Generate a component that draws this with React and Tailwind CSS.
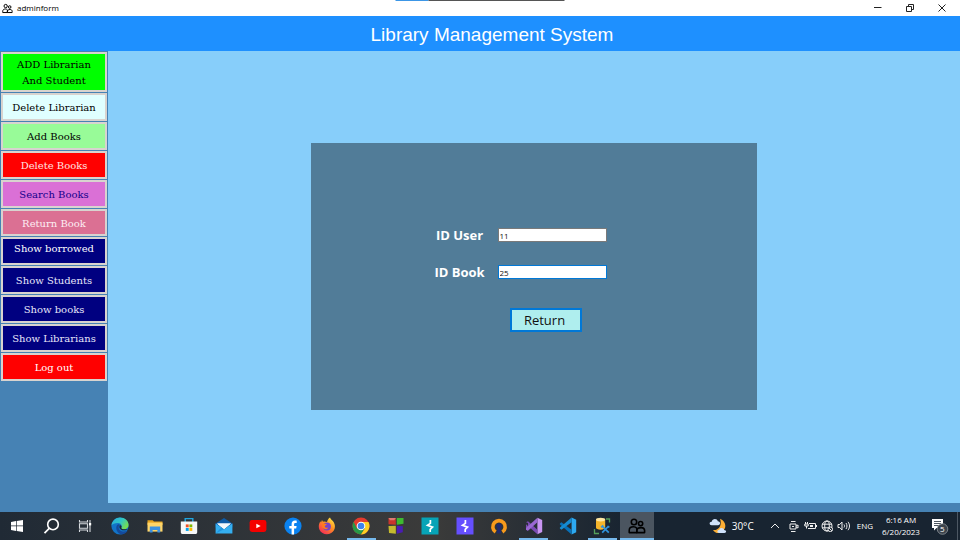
import React, { useState } from "react";

const menuItems = [
  { label: "Delete Librarian", style: "items-center bg-[#e0ffff] text-black" },
  { label: "Add Books", style: "items-center bg-[#98fb98] text-black" },
  { label: "Delete Books", style: "items-center bg-[#ff0000] text-[#ffe4e1]" },
  { label: "Search Books", style: "items-center bg-[#da70d6] text-[#14008c]" },
  { label: "Return Book", style: "items-center bg-[#db7093] text-[#fdeef4]" },
  { label: "Show borrowed", style: "items-start bg-[#000080] text-white" },
  { label: "Show Students", style: "items-center bg-[#000080] text-[#e6e6fa]" },
  { label: "Show books", style: "items-center bg-[#000080] text-[#e6e6fa]" },
  { label: "Show Librarians", style: "items-center bg-[#000080] text-[#e6e6fa]" },
  { label: "Log out", style: "items-center bg-[#ff0000] text-white" },
];

function PeopleIcon({ className }) {
  return (
    <svg className={className} viewBox="0 0 18 16" fill="none" stroke="#000" strokeWidth="1.6" strokeLinejoin="round">
      <circle cx="6" cy="4" r="2.7" />
      <circle cx="12.6" cy="5.6" r="2.1" />
      <path d="M1.2 14.6v-2.2c0-2.2 1.8-3.6 4.2-3.6 1.4 0 2.6.4 3.4 1.4v4.4z" />
      <path d="M8.8 14.6h7.8v-2c0-1.8-1.4-3-3.4-3-2.6 0-4.4 1.4-4.4 3z" />
    </svg>
  );
}

function Icon({ children }) {
  return (
    <svg className="h-[18px] w-[18px]" viewBox="0 0 18 18" fill="none" aria-hidden="true">
      {children}
    </svg>
  );
}

const apps = [
  {
    name: "Start",
    icon: (
      <Icon>
        <path fill="#fff" d="M3 4.9 8 4.1v4.5H3zM8.7 4 15 3v5.6H8.7zM3 9.3h5v4.6l-5-.8zM8.7 9.3H15V15l-6.3-1z" />
      </Icon>
    ),
  },
  {
    name: "Search",
    icon: (
      <Icon>
        <circle cx="10" cy="7.400" r="5.300" stroke="#fff" strokeWidth="1.600" />
        <path d="M6.200 11.400 1.500 16.200" stroke="#fff" strokeWidth="1.700" />
      </Icon>
    ),
  },
  {
    name: "Task view",
    icon: (
      <Icon>
        <path d="M2.500 3v2h8V3M2.500 15v-2h8v2M2.500 6.800h8v4.400h-8zM13 3v12" stroke="#d5d9dd" strokeWidth="1.100" />
        <path d="M12 6h2.200v2.400H12z" fill="#fff" />
      </Icon>
    ),
  },
  {
    name: "Edge",
    icon: (
      <Icon>
        <defs>
          <linearGradient id="edgeTop" x1="0" y1="0" x2="1" y2=".6">
            <stop stopColor="#25a7e0" />
            <stop offset=".55" stopColor="#31c6c4" />
            <stop offset="1" stopColor="#78dd4c" />
          </linearGradient>
        </defs>
        <circle cx="9" cy="9" r="8.6" fill="#1274c8" />
        <path d="M.5 8.4C1 3.7 4.6.4 9 .4c5 0 8.6 3.5 8.6 7.4 0 2.8-2 4.5-4.6 4.5-2 0-3.2-.8-2.7-1.6 1.3-2-.2-4.6-3.2-4.7C4 5.9 1.4 6.9.5 8.4z" fill="url(#edgeTop)" />
        <path d="M6.2 7.9c-2 2.6-.8 8 4.3 9.6 2.7-.3 5-1.8 6.3-4-4.5 2.2-9.8.5-9.1-4.1.1-.8.5-1.4 1-1.9-.9-.3-1.8-.2-2.5.4z" fill="#144a9c" />
        <path d="M8.9 8c-1.8 3.3 1.6 6.4 6.4 5l2.2-1.3c-1.3.8-7.6 1.3-7.2-1 .7-1.2.1-2.1-1.4-2.7z" fill="#1b2634" />
      </Icon>
    ),
  },
  {
    name: "File Explorer",
    icon: (
      <Icon>
        <path d="M1.5 3.2h5.2l1.3 1.4h8.5V8h-15z" fill="#e5a31e" />
        <path d="M1.5 5.6h15v9h-15z" fill="#ffd568" />
        <path d="M3.8 15.5V9.6h10.4v5.9h-2.8v-2.6H6.6v2.6z" fill="#3c91e0" />
      </Icon>
    ),
  },
  {
    name: "Microsoft Store",
    icon: (
      <Icon>
        <path d="M5.2 5V1.6h7.6V5" stroke="#20a6e0" strokeWidth="1.4" />
        <path d="M.8 4.4h16.4v10.8c0 1-.7 1.8-1.8 1.8H2.6c-1.1 0-1.8-.8-1.8-1.8z" fill="#f5f6f7" />
        <path d="M5.8 7.4h2.9v2.9H5.8z" fill="#f25022" />
        <path d="M9.4 7.4h2.9v2.9H9.4z" fill="#7fba00" />
        <path d="M5.8 11h2.9v2.9H5.8z" fill="#00a4ef" />
        <path d="M9.4 11h2.9v2.9H9.4z" fill="#ffb900" />
      </Icon>
    ),
  },
  {
    name: "Mail",
    icon: (
      <Icon>
        <path d="M.6 6.6 9 1l8.400 5.600v4H.6z" fill="#0d5ba6" />
        <path d="M2.200 6.400h13.600L9 12.600z" fill="#f3f8fb" />
        <path d="M.6 6.600 9 12.200l8.400-5.600v10H.6z" fill="#35aff0" />
        <path d="M2 6.500h14L9 12z" fill="#f3f8fb" />
        <path d="m.6 16.600 5.600-6.200L9 12.200z" fill="#2196e0" />
      </Icon>
    ),
  },
  {
    name: "YouTube",
    icon: (
      <Icon>
        <rect x=".6" y="3" width="16.8" height="12" rx="2.4" fill="#f40000" />
        <path d="m7.3 6.7 4.4 2.3-4.4 2.3z" fill="#fff" />
      </Icon>
    ),
  },
  {
    name: "Facebook",
    icon: (
      <Icon>
        <circle cx="9" cy="9" r="8.6" fill="#0a82f0" />
        <path d="M7.6 17.5v-6H5.3V8.9h2.3V7.2c0-2.4 1.3-3.6 3.4-3.6.8 0 1.5.1 1.7.2v2.1h-1.2c-1.1 0-1.4.6-1.4 1.4v1.6h2.5l-.4 2.6h-2.1v6z" fill="#fff" />
      </Icon>
    ),
  },
  {
    name: "Firefox",
    icon: (
      <Icon>
        <defs>
          <linearGradient id="fox" x1=".9" y1="0" x2=".2" y2="1">
            <stop stopColor="#fff04a" />
            <stop offset=".45" stopColor="#ff9220" />
            <stop offset="1" stopColor="#f4265b" />
          </linearGradient>
        </defs>
        <path d="M12 .6c.5 1.7 1.8 2.3 2.8 3.5 3.4 4 2.6 9.5-1.6 12-4.3 2.5-9.7 1-11.7-3.3C.2 9.8.8 6.6 2.4 4.2l.6 1.3 1-2.4 1 1.7c1.5-.4 3-.1 4 .3.4-1.8 1.4-3.5 3-4.5z" fill="url(#fox)" />
        <circle cx="9" cy="9.5" r="3.9" fill="#7544c8" />
        <path d="M4.4 6.9c1.4-.7 2.8.1 4.4.3-.1 1-1.5 1.2-2 1.700-.2 1.600 1.600 2.400 3.500 1.500-1 2.600-5 2.200-5.900-.4z" fill="#ff7a1c" />
      </Icon>
    ),
  },
  {
    name: "Chrome",
    running: true,
    icon: (
      <Icon>
        <circle cx="9" cy="9" r="8.5" fill="#e33b2e" />
        <path d="M1.6 4.8A8.5 8.5 0 0 0 9 17.5l4-6.3-8 .2z" fill="#279847" />
        <path d="M9 17.5A8.5 8.5 0 0 0 16.5 5H9l4 6.3z" fill="#fdd023" />
        <circle cx="9" cy="9" r="4.3" fill="#fff" />
        <circle cx="9" cy="9" r="3.3" fill="#3d83ee" />
      </Icon>
    ),
  },
  {
    name: "Blocks",
    icon: (
      <Icon>
        <path d="M1.500 1h7.300v6.800l-7.300-.5z" fill="#c9352c" />
        <path d="M9.800 1h6.700v5.800l-6.700 1z" fill="#3dba30" />
        <path d="M1.500 9l7.300-.2v8L2 16z" fill="#c5ba2e" />
        <path d="M9.800 8.800l6 .4v6l-6 1.600z" fill="#4a1cb4" />
        <path d="M1.500 1h7.300L7.300 3.200H3z" fill="#de7a71" />
      </Icon>
    ),
  },
  {
    name: "Burp Suite Community",
    icon: (
      <Icon>
        <path d="M.5.5h17v17H.5z" fill="#07a4b7" />
        <path d="M9.400 3v3.400L6.500 8.300l5 1.800-2.300 2.200V15" stroke="#fff" strokeWidth="1.700" />
      </Icon>
    ),
  },
  {
    name: "Burp Suite",
    icon: (
      <Icon>
        <path d="M.5.5h17v17H.5z" fill="#654fff" />
        <path d="M9.400 3v3.400L6.500 8.300l5 1.800-2.300 2.200V15" stroke="#fff" strokeWidth="1.700" />
      </Icon>
    ),
  },
  {
    name: "OpenVPN",
    icon: (
      <Icon>
        <path d="M5.6 15A6.2 6.2 0 1 1 12.400 15" stroke="#f79a1c" strokeWidth="3.6" />
        <path d="M9 6.2a2.8 2.8 0 0 1 1.5 5.100l.6 5.300H6.900l.6-5.300A2.800 2.800 0 0 1 9 6.200z" fill="#1d2a70" />
      </Icon>
    ),
  },
  {
    name: "Visual Studio",
    running: true,
    icon: (
      <Icon>
        <path d="M12.400.8 17.200 3v12l-4.800 2.200z" fill="#c995f3" />
        <path d="M1 5.200 3 4.300l9.400 8.500v4.400L1 7.200zM1 5.200v7.600l2 .9V6z" fill="#7c4bb5" />
        <path d="M3 13.700 12.400 5.200V.8L1 11v1.800z" fill="#9a68d2" />
      </Icon>
    ),
  },
  {
    name: "Visual Studio Code",
    icon: (
      <Icon>
        <path d="M12.600.6 17.200 2.700v12.600l-4.600 2.100z" fill="#2da9f1" />
        <path d="m.9 6.400 1.500-1.100 10.200 7.500v4.600L.9 7.400z" fill="#0871b9" />
        <path d="m.9 11.600 1.500 1.100L12.600 5.200V.6L.9 10.600z" fill="#168bd2" />
      </Icon>
    ),
  },
  {
    name: "SQL Server",
    running: true,
    icon: (
      <Icon>
        <path d="M13 2h3.500v3.500M1.500 12v4.500H6" stroke="#55a05a" strokeWidth="1.300" />
        <path d="M3 2.600v8.200c0 1 1.900 1.900 4.600 1.900s4.600-.9 4.600-1.900V2.600z" fill="#f5b52b" />
        <ellipse cx="7.600" cy="2.600" rx="4.600" ry="1.900" fill="#ffe7a0" />
        <path d="m9 8.800 6.800 6.800M15.700 9l-6.500 6.700M8.200 10.400l2-2M14.400 9.200l2 1" stroke="#2f93df" strokeWidth="1.700" />
      </Icon>
    ),
  },
  {
    name: "adminform",
    running: true,
    active: true,
    icon: <PeopleIcon className="h-4 w-[18px]" />,
  },
];

function Field({ id, label, value, onChange, border }) {
  return (
    <>
      <label htmlFor={id} className="text-center text-[13px] leading-[14px] font-bold text-white">
        {label}
      </label>
      <input
        id={id}
        value={value}
        onChange={(e) => onChange(e.target.value)}
        className={"h-[14px] w-full border bg-white px-px font-['Open_Sans',sans-serif] text-[8px] leading-3 text-[#111] outline-none " + border}
      />
    </>
  );
}

export default function App() {
  const [user, setUser] = useState("11");
  const [book, setBook] = useState("25");

  return (
    <div className="flex min-h-screen flex-col bg-[#4682b4] font-['Open_Sans','Noto_Sans',sans-serif]">
      <div className="relative flex h-4 items-center bg-white pr-[14px] pl-[2px] text-black">
        <div className="absolute top-0 left-1/2 flex h-px w-[169px] -translate-x-1/2">
          <span className="w-[33px] bg-[#3c96e6]" />
          <span className="flex-1 bg-[#555]" />
        </div>
        <PeopleIcon className="h-[11px] w-[11px]" />
        <span className="ml-1 text-[8px] leading-3">adminform</span>
        <div className="ml-auto flex items-center gap-6">
          <button aria-label="Minimize" className="h-2 w-2">
            <svg viewBox="0 0 8 8" className="h-2 w-2" stroke="#222"><path d="M0 3.500h7.500" /></svg>
          </button>
          <button aria-label="Restore" className="h-2 w-2">
            <svg viewBox="0 0 8 8" className="h-2 w-2" fill="none" stroke="#222"><path d="M.5 2.500h5v5h-5zM2.500 2.500v-2h5v5h-2" /></svg>
          </button>
          <button aria-label="Close" className="h-2 w-2">
            <svg viewBox="0 0 8 8" className="h-2 w-2" stroke="#222"><path d="m.5.5 7 7M7.500.5l-7 7" /></svg>
          </button>
        </div>
      </div>

      <header className="flex h-[35px] items-center justify-center bg-[#1e90ff] pt-[2px] pl-6">
        <h1 className="font-['Liberation_Sans',Arial,sans-serif] text-[19px] leading-6 text-white">Library Management System</h1>
      </header>

      <div className="flex flex-1">
        <nav className="w-[108px] shrink-0 px-px pt-px font-['DejaVu_Serif',serif] text-[10px] leading-4">
          <button className="mb-px flex h-10 w-full items-center justify-center border-2 border-[#d8d3cf] bg-[#00ff00] px-1 pt-[2px] text-black">
            ADD Librarian
            <br />
            And Student
          </button>
          <div className="grid h-[288px] grid-rows-10 gap-px">
            {menuItems.map((item) => (
              <button
                key={item.label}
                className={"flex min-h-0 justify-center border-2 border-[#d8d3cf] pt-[2px] whitespace-nowrap " + item.style}
              >
                {item.label}
              </button>
            ))}
          </div>
        </nav>

        <main className="flex flex-1 items-center justify-center bg-[#87cefa] pb-[2px]">
          <form
            onSubmit={(e) => e.preventDefault()}
            className="flex h-[267px] w-[446px] flex-col items-center justify-center bg-[#517c98] pt-2 pr-7"
          >
            <div className="grid grid-cols-[52px_109px] items-center gap-x-3 gap-y-[23px]">
              <Field id="user" label="ID User" value={user} onChange={setUser} border="border-[#7a7a7a]" />
              <Field id="book" label="ID Book" value={book} onChange={setBook} border="border-[#0078d7]" />
              <button className="col-start-2 mt-[6px] ml-3 h-6 w-[72px] border-2 border-[#0078d7] bg-[#afeeee] pr-[2px] text-[13px] leading-5 text-[#111]">
                Return
              </button>
            </div>
          </form>
        </main>
      </div>

      <footer className="mt-[9px] flex h-7 bg-gradient-to-r from-[#202a35] via-[#3b3b3a] via-45% to-[#182431] to-65% text-white">
        <div className="grid w-[654px] grid-cols-19">
          {apps.map((app) => (
            <button
              key={app.name}
              aria-label={app.name}
              className={"relative flex items-center justify-center " + (app.active ? "bg-[#4b5560]" : "")}
            >
              {app.icon}
              {app.running && (
                <span className={"absolute bottom-0 h-[2px] bg-[#76b9ed] " + (app.active ? "inset-x-0" : "inset-x-[3px]")} />
              )}
            </button>
          ))}
        </div>

        <div className="ml-auto flex items-center text-[8px] leading-3">
          <svg className="h-4 w-[18px]" viewBox="0 0 18 16">
            <path d="M11 .8c5.800 2 7 8.600 3 12.300-3.300 3-8 2.400-10-1.200 5.400 1 9.400-4.300 7-11.100z" fill="#fcae34" />
            <path d="M2.700 7.200C-.3 7 .2 3.500 2.700 3.700 3.300.3 8.200.1 8.800 3.300c3 0 3 3.900.2 3.900z" fill="#cfe2fa" />
            <path d="M10.200 15c-2.600-.2-2.300-3.100 0-3 .6-2.700 4.400-2.600 4.900 0 2.700 0 2.700 3 .2 3z" fill="#cfe2fa" />
          </svg>
          <span className="ml-[5px] text-[10px]">30°C</span>
          <div className="ml-4 flex items-center gap-1">
            <svg className="mr-1 h-3 w-[10px]" viewBox="0 0 10 12" fill="none" stroke="#eee"><path d="m1 8 4-4 4 4" /></svg>
            <svg className="h-[13px] w-3" viewBox="0 0 12 13" fill="none" stroke="#eee"><path d="M2 4h6v5H2zM8 6l2-1v3L8 7M3 1.500h4.500M3 11.500h4.500M4 6.500h2" /></svg>
            <svg className="h-3 w-[13px]" viewBox="0 0 13 12" fill="none" stroke="#eee"><path d="M5 3.500h6.500v5H4M1.500 2v2M3.500 2v2M.8 4h3.400v2H.8zM2.500 6v2.500M12.500 5v2" /><path d="M6 5h3v2H6z" fill="#eee" stroke="none" /></svg>
            <svg className="h-3 w-3" viewBox="0 0 12 12" fill="none" stroke="#eee"><circle cx="6" cy="6" r="5" /><ellipse cx="6" cy="6" rx="2.300" ry="5" /><path d="M1 4.200h10M1 7.800h10" /><circle cx="9.300" cy="9.300" r="2.300" fill="#1c2733" /><path d="m7.700 7.700 3.200 3.200" /></svg>
            <svg className="h-3 w-[13px]" viewBox="0 0 13 12" fill="none" stroke="#eee"><path d="M1 4.500h1.700L5 2v8L2.700 7.500H1zM7 4.500c.7 1 .7 2 0 3M9 3c1.300 2 1.300 4 0 6M11 1.800c2 2.800 2 5.600 0 8.400" /></svg>
            <span className="ml-[3px]">ENG</span>
          </div>
          <div className="ml-2 w-10 text-center whitespace-nowrap">
            6:16 AM
            <br />
            6/20/2023
          </div>
          <button aria-label="Notifications, 5 new" className="relative mr-2 ml-[10px] h-5 w-[18px]">
            <svg className="h-5 w-[18px]" viewBox="0 0 18 20">
              <path d="M1 3h11v9H5.500L3 14.500V12H1z" fill="#fff" />
              <path d="M3 5.500h7M3 7.500h7M3 9.500h5" stroke="#202c38" strokeWidth=".8" />
              <circle cx="11.500" cy="13" r="5.300" fill="#3b434c" stroke="#99a0a6" strokeWidth=".7" />
            </svg>
            <span className="absolute top-[7px] left-[9px] text-[8px] leading-3">5</span>
          </button>
          <span className="mr-[2px] h-full w-px bg-[#4c5763]" />
        </div>
      </footer>
    </div>
  );
}
